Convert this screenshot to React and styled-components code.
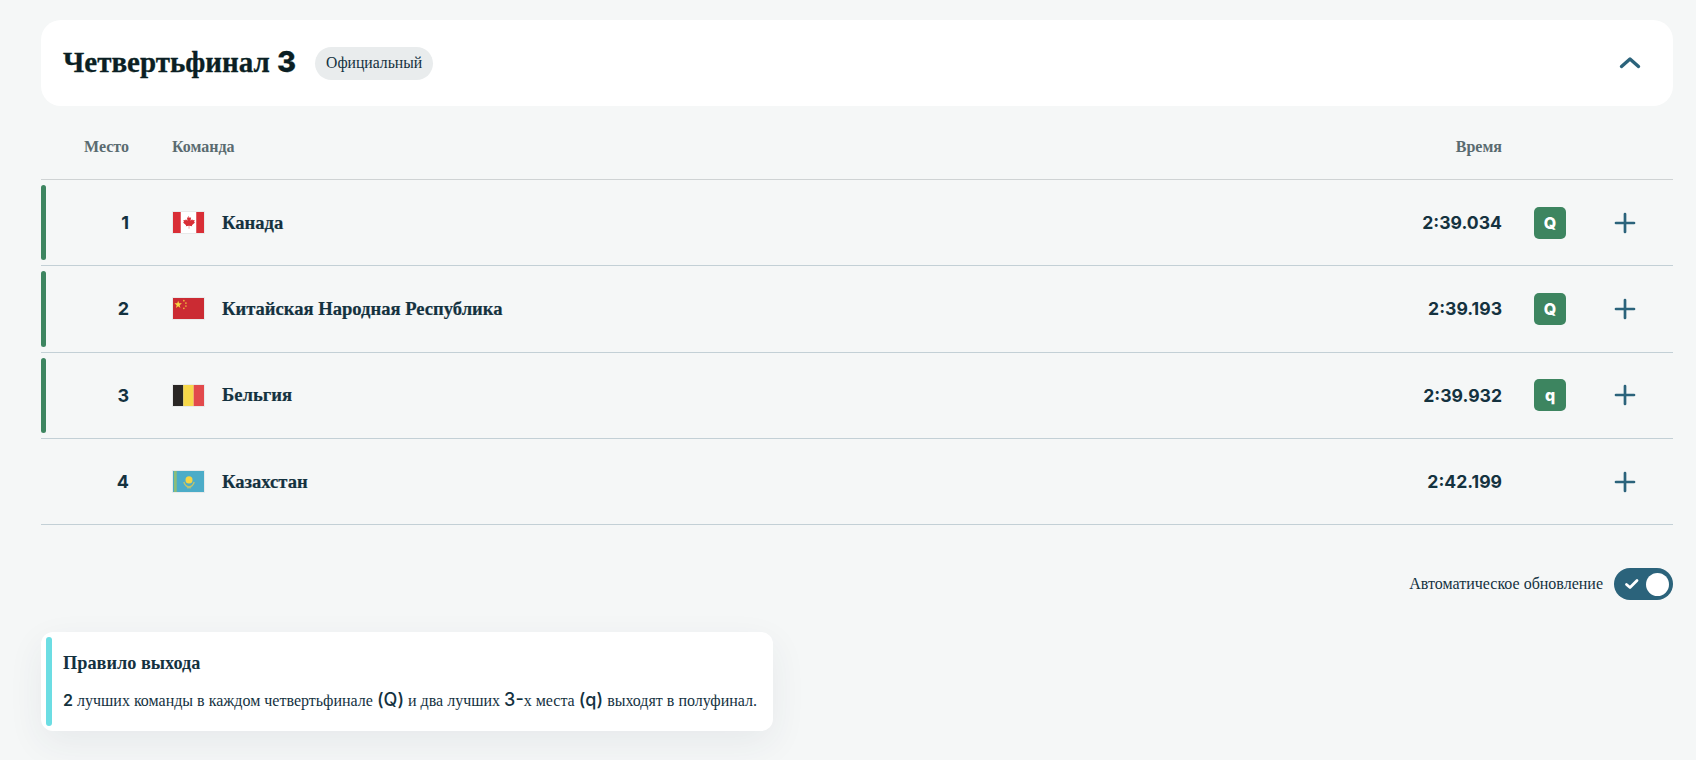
import React, { useState } from 'react';
import styled, { createGlobalStyle } from 'styled-components';

const GlobalStyle = createGlobalStyle`
  html, body {
    margin: 0;
    padding: 0;
    background: #f5f7f7;
  }
  body {
    font-family: 'Liberation Serif', 'Times New Roman', serif;
    color: #14323f;
    overflow: hidden;
  }
`;

const Page = styled.div`
  padding: 20px 23px 0 41px;
  height: 760px;
  box-sizing: border-box;
`;

const Header = styled.div`
  height: 86px;
  background: #fff;
  border-radius: 20px;
  display: flex;
  align-items: center;
  padding: 0 30px 0 22px;
`;

const Title = styled.h2`
  margin: 0 0 2px;
  font-size: 29px;
  line-height: 36px;
  font-weight: 700;
  color: #0b1f24;
  -webkit-text-stroke: 0.3px #0b1f24;
`;

const Num = styled.span`
  font-family: Inter, 'Noto Sans', sans-serif;
  font-weight: ${(p) => p.weight || 600};
  font-size: ${(p) => p.size || 'inherit'};
`;

const Status = styled.span`
  margin-left: 19px;
  height: 33px;
  padding: 0 11px;
  border-radius: 17px;
  background: #e9eced;
  display: flex;
  align-items: center;
  font-size: 15.7px;
`;

const Collapse = styled.button`
  margin-left: auto;
  border: none;
  background: none;
  padding: 0;
  width: 24px;
  height: 24px;
  color: #2b637b;
  display: flex;
`;

const TableHead = styled.div`
  height: 74px;
  box-sizing: border-box;
  padding-top: 8px;
  display: grid;
  grid-template-columns: 88px 1fr 100px 171px;
  align-items: center;
  border-bottom: 1px solid #cfd3d4;
  font-size: 16px;
  font-weight: 700;
  color: #5a6b70;
`;

const HeadPlace = styled.div`
  text-align: right;
`;

const HeadTeam = styled.div`
  padding-left: 43px;
`;

const HeadTime = styled.div`
  text-align: right;
`;

const Row = styled.div`
  height: 86.3px;
  box-sizing: border-box;
  display: grid;
  grid-template-columns: 5px 83px 1fr 100px 64px 107px;
  align-items: center;
  border-bottom: 1px solid #c3d0d6;
`;

const QualBar = styled.div`
  align-self: stretch;
  width: 4.5px;
  margin: 5px 0;
  border-radius: 3px;
  background: ${(p) => (p.active ? '#3d8560' : 'transparent')};
`;

const Place = styled.div`
  text-align: right;
  font-family: Inter, 'Noto Sans', sans-serif;
  font-weight: 700;
  font-size: 18px;
`;

const Team = styled.div`
  padding-left: 43px;
  display: flex;
  align-items: center;
`;

const FlagBox = styled.svg`
  width: 33px;
  height: 23px;
  display: block;
  flex: none;
  border: 1px solid #e8eaea;
  box-sizing: border-box;
`;

const TeamName = styled.span`
  margin-left: 17px;
  font-size: 18.6px;
  font-weight: 700;
  -webkit-text-stroke: 0.2px #14323f;
`;

const Time = styled.div`
  text-align: right;
  font-family: Inter, 'Noto Sans', sans-serif;
  font-weight: 700;
  font-size: 17.6px;
`;

const BadgeCell = styled.div`
  padding-left: 32px;
`;

const Badge = styled.div`
  width: 32px;
  height: 32px;
  border-radius: 5px;
  background: #3d8560;
  color: #fff;
  display: flex;
  align-items: center;
  justify-content: center;
  font-family: Inter, 'Noto Sans', sans-serif;
  font-weight: 800;
  font-size: 16px;
`;

const Expand = styled.button`
  margin-left: 47px;
  border: none;
  background: none;
  padding: 0;
  width: 24px;
  height: 24px;
  color: #2b637b;
  display: flex;
`;

const AutoUpdate = styled.div`
  margin-top: 43px;
  display: flex;
  justify-content: flex-end;
  align-items: center;
  gap: 11px;
  font-size: 16px;
`;

const Toggle = styled.button`
  width: 59px;
  height: 32px;
  border: none;
  border-radius: 16px;
  background: #2b637b;
  padding: 0 4px 0 10px;
  display: flex;
  align-items: center;
  justify-content: space-between;
  color: #fff;
`;

const Knob = styled.span`
  width: 23px;
  height: 23px;
  border-radius: 50%;
  background: #fff;
`;

const RuleCard = styled.div`
  margin-top: 32px;
  width: 732px;
  height: 99px;
  box-sizing: border-box;
  padding: 5px 14px 5px 5px;
  display: flex;
  background: #fff;
  border-radius: 12px;
  box-shadow: 0 12px 36px rgba(40, 60, 80, 0.07);
`;

const RuleBar = styled.div`
  width: 6px;
  border-radius: 3px;
  background: #6cdde3;
  flex: none;
`;

const RuleBody = styled.div`
  margin-left: 11px;
  padding-top: 15px;
`;

const RuleTitle = styled.div`
  font-size: 18.3px;
  line-height: 22px;
  font-weight: 700;
`;

const RuleText = styled.div`
  margin-top: 15px;
  font-size: 16px;
  line-height: 22px;
  white-space: nowrap;
`;

const ChevronUp = () => (
  <svg width="24" height="24" viewBox="0 0 24 24" fill="none" stroke="currentColor" strokeWidth="3.4" strokeLinecap="round" strokeLinejoin="round">
    <path d="M2.5 15.5 11 8l8.5 7.5" />
  </svg>
);

const PlusIcon = () => (
  <svg width="24" height="24" viewBox="0 0 24 24" fill="none" stroke="currentColor" strokeWidth="2.7" strokeLinecap="round">
    <path d="M12 3v18M3 12h18" />
  </svg>
);

const CheckIcon = () => (
  <svg width="16" height="16" viewBox="0 0 16 16" fill="none" stroke="currentColor" strokeWidth="2.8" strokeLinecap="round" strokeLinejoin="round">
    <path d="M2.5 8.5 6 11.5l7-7" />
  </svg>
);

const CanadaFlag = () => (
  <FlagBox viewBox="0 0 30 20" preserveAspectRatio="none">
    <rect width="30" height="20" fill="#fff" />
    <rect width="7.5" height="20" fill="#d92e36" />
    <rect x="22.5" width="7.5" height="20" fill="#d92e36" />
    <path
      d="M15 3.5l1.2 2.3 1.3-.7-.5 3.2 1.6-1.5.4 1 2-.3-.6 2 .9.5-3 2.5.3 1.1-2.9-.4V16h-.4v-2.8l-2.9.4.3-1.1-3-2.5.9-.5-.6-2 2 .3.4-1 1.6 1.5-.5-3.2 1.3.7z"
      fill="#d92e36"
    />
  </FlagBox>
);

const ChinaFlag = () => (
  <FlagBox viewBox="0 0 30 20" preserveAspectRatio="none">
    <rect width="30" height="20" fill="#cb2b33" />
    <path d="M5 2.5l.9 2.6h2.7L6.4 6.8l.8 2.7L5 7.9 2.8 9.5l.8-2.7-2.2-1.7h2.7z" fill="#f6d743" />
    <circle cx="10.5" cy="2.5" r="0.8" fill="#f0b93a" />
    <circle cx="12.5" cy="4.8" r="0.8" fill="#f0b93a" />
    <circle cx="12.5" cy="7.6" r="0.8" fill="#f0b93a" />
    <circle cx="10.5" cy="9.8" r="0.8" fill="#f0b93a" />
  </FlagBox>
);

const BelgiumFlag = () => (
  <FlagBox viewBox="0 0 30 20" preserveAspectRatio="none">
    <rect width="10" height="20" fill="#2a2725" />
    <rect x="10" width="10" height="20" fill="#f7d84a" />
    <rect x="20" width="10" height="20" fill="#e24a4c" />
  </FlagBox>
);

const KazakhstanFlag = () => (
  <FlagBox viewBox="0 0 30 20" preserveAspectRatio="none">
    <rect width="30" height="20" fill="#4cacc8" />
    <rect x="1" width="2.6" height="20" fill="#8dbd78" />
    <circle cx="15.5" cy="8.5" r="3.4" fill="#f5d544" />
    <path d="M10.5 10.5c1 3.5 3 4.5 5 4.7 2-.2 4-1.2 5-4.7" fill="none" stroke="#c2c46a" strokeWidth="1.3" />
    <rect x="13.5" y="15.5" width="4" height="1" fill="#c2c46a" />
  </FlagBox>
);

const teams = [
  { place: 1, name: 'Канада', Flag: CanadaFlag, time: '2:39.034', mark: 'Q' },
  { place: 2, name: 'Китайская Народная Республика', Flag: ChinaFlag, time: '2:39.193', mark: 'Q' },
  { place: 3, name: 'Бельгия', Flag: BelgiumFlag, time: '2:39.932', mark: 'q' },
  { place: 4, name: 'Казахстан', Flag: KazakhstanFlag, time: '2:42.199', mark: null },
];

export default function App() {
  const [auto, setAuto] = useState(true);

  return (
    <Page>
      <GlobalStyle />
      <Header>
        <Title>
          Четвертьфинал <Num weight={800}>3</Num>
        </Title>
        <Status>Официальный</Status>
        <Collapse aria-label="Свернуть">
          <ChevronUp />
        </Collapse>
      </Header>

      <TableHead>
        <HeadPlace>Место</HeadPlace>
        <HeadTeam>Команда</HeadTeam>
        <HeadTime>Время</HeadTime>
      </TableHead>

      {teams.map(({ place, name, Flag, time, mark }) => (
        <Row key={place}>
          <QualBar active={!!mark} />
          <Place>{place}</Place>
          <Team>
            <Flag />
            <TeamName>{name}</TeamName>
          </Team>
          <Time>{time}</Time>
          <BadgeCell>{mark && <Badge>{mark}</Badge>}</BadgeCell>
          <Expand aria-label="Подробнее">
            <PlusIcon />
          </Expand>
        </Row>
      ))}

      <AutoUpdate>
        Автоматическое обновление
        <Toggle onClick={() => setAuto(!auto)} aria-pressed={auto}>
          <CheckIcon />
          <Knob />
        </Toggle>
      </AutoUpdate>

      <RuleCard>
        <RuleBar />
        <RuleBody>
          <RuleTitle>Правило выхода</RuleTitle>
          <RuleText>
            <Num>2</Num> лучших команды в каждом четвертьфинале <Num weight={500} size="18px">(Q)</Num> и два лучших{' '}
            <Num weight={500} size="18px">3-</Num>х места <Num weight={500} size="18px">(q)</Num> выходят в полуфинал.
          </RuleText>
        </RuleBody>
      </RuleCard>
    </Page>
  );
}
